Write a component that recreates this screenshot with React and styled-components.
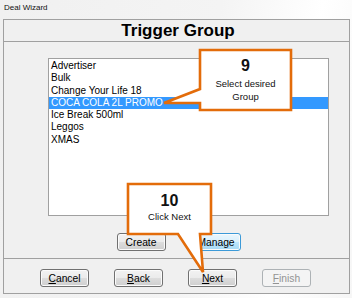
import React from "react";
import styled, { createGlobalStyle, css } from "styled-components";

const GlobalStyle = createGlobalStyle`
  html, body { margin: 0; padding: 0; }
  body {
    background: #f3f3f3;
    font-family: "Liberation Sans", Arial, sans-serif;
  }
`;

const Window = styled.div`
  position: relative;
  width: 352px;
  height: 298px;
  overflow: hidden;
  background: linear-gradient(100deg, #f0f0f0 0%, #f4f4f4 55%, #ffffff 80%, #f6f6f6 100%);
`;

const TitleBar = styled.div`
  height: 19px;
  padding-left: 4px;
  font-size: 8px;
  line-height: 16px;
  color: #111;
  box-sizing: border-box;
`;

const Panel = styled.div`
  margin-left: 3px;
  width: 347px;
  height: 275px;
  box-sizing: border-box;
  border: 1px solid #a0a0a0;
  background: #f0f0f0;
  display: flex;
  flex-direction: column;
`;

const Header = styled.div`
  height: 22px;
  box-sizing: border-box;
  border-bottom: 1px solid #a0a0a0;
  display: flex;
  align-items: center;
  justify-content: center;
  padding-left: 3px;
  font-size: 17px;
  font-weight: bold;
  color: #000;
`;

const Body = styled.div`
  padding: 16px 0 0 44px;
`;

const ListBox = styled.div`
  width: 281px;
  height: 158px;
  box-sizing: border-box;
  border: 1px solid #a0a0a0;
  background: #fff;
  padding-top: 1px;
`;

const Item = styled.div`
  height: 12.3px;
  line-height: 12.3px;
  padding-left: 2px;
  font-size: 10px;
  color: #000;
  white-space: nowrap;
  ${(p) =>
    p.$selected &&
    css`
      background: #3399ff;
      color: #fff;
    `}
`;

const ButtonRow = styled.div`
  display: flex;
  justify-content: center;
  gap: 26px;
  margin-top: 17px;
  padding-left: 4px;
`;

const Separator = styled.div`
  margin-top: 7px;
  border-top: 1px solid #a0a0a0;
`;

const Footer = styled.div`
  display: flex;
  gap: 25px;
  padding: 10px 0 0 36px;
`;

const Button = styled.div`
  width: ${(p) => p.$w || 49}px;
  height: 18px;
  box-sizing: border-box;
  border: 1px solid #707070;
  border-radius: 3px;
  background: linear-gradient(#f2f2f2 0%, #ebebeb 50%, #dddddd 50%, #cfcfcf 100%);
  box-shadow: inset 0 0 0 1px #fbfbfb;
  display: flex;
  align-items: center;
  justify-content: center;
  font-size: 10.3px;
  color: #000;
  u { text-decoration: underline; text-underline-offset: 1px; }
  ${(p) =>
    p.$focus &&
    css`
      border-color: #3c9ad8;
      background: linear-gradient(#eaf6fd 0%, #d9f0fc 50%, #bee6fd 50%, #a7d9f5 100%);
    `}
  ${(p) =>
    p.$disabled &&
    css`
      border-color: #adb2b5;
      background: #f4f4f4;
      box-shadow: none;
      color: #939393;
    `}
`;

const Callout = styled.div`
  position: absolute;
  left: ${(p) => p.$x}px;
  top: ${(p) => p.$y}px;
  width: ${(p) => p.$w}px;
  height: ${(p) => p.$h}px;
  svg { position: absolute; left: 0; top: 0; overflow: visible; }
`;

const CalloutText = styled.div`
  position: absolute;
  left: ${(p) => p.$left}px;
  top: 0;
  width: ${(p) => p.$width}px;
  padding-top: ${(p) => p.$pad}px;
  display: flex;
  flex-direction: column;
  align-items: center;
  color: #111;
`;

const Num = styled.div`
  font-size: 16px;
  font-weight: bold;
  line-height: 18px;
`;

const Note = styled.div`
  font-size: 9.5px;
  line-height: 13px;
  margin-top: ${(p) => p.$mt || 0}px;
  text-align: center;
`;

const ORANGE = "#e36c0a";

const items = [
  "Advertiser",
  "Bulk",
  "Change Your Life 18",
  "COCA COLA 2L PROMO",
  "Ice Break 500ml",
  "Leggos",
  "XMAS",
];

export default function App() {
  return (
    <>
      <GlobalStyle />
      <Window>
        <TitleBar>Deal Wizard</TitleBar>
        <Panel>
          <Header>Trigger Group</Header>
          <Body>
            <ListBox>
              {items.map((t, i) => (
                <Item key={t} $selected={i === 3}>
                  {t}
                </Item>
              ))}
            </ListBox>
          </Body>
          <ButtonRow>
            <Button>Create</Button>
            <Button $focus>Manage</Button>
          </ButtonRow>
          <Separator />
          <Footer>
            <Button>
              <span><u>C</u>ancel</span>
            </Button>
            <Button>
              <span><u>B</u>ack</span>
            </Button>
            <Button>
              <span><u>N</u>ext</span>
            </Button>
            <Button $disabled>
              <span><u>F</u>inish</span>
            </Button>
          </Footer>
        </Panel>

        <Callout $x={163} $y={49} $w={130} $h={63}>
          <svg width="130" height="63">
            <polygon
              points="37,1 128,1 128,61 37,61 37,54 1,54 37,40"
              fill="#fff"
              stroke={ORANGE}
              strokeWidth="2.6"
              strokeLinejoin="miter"
            />
          </svg>
          <CalloutText $left={37} $width={91} $pad={8}>
            <Num>9</Num>
            <Note $mt={2}>Select desired</Note>
            <Note>Group</Note>
          </CalloutText>
        </Callout>

        <Callout $x={127} $y={183} $w={86} $h={92}>
          <svg width="86" height="92">
            <polygon
              points="1,1 84,1 84,51 73,51 76,89 51,51 1,51"
              fill="#fff"
              stroke={ORANGE}
              strokeWidth="2.6"
              strokeLinejoin="miter"
            />
          </svg>
          <CalloutText $left={1} $width={83} $pad={9}>
            <Num>10</Num>
            <Note>Click Next</Note>
          </CalloutText>
        </Callout>
      </Window>
    </>
  );
}
